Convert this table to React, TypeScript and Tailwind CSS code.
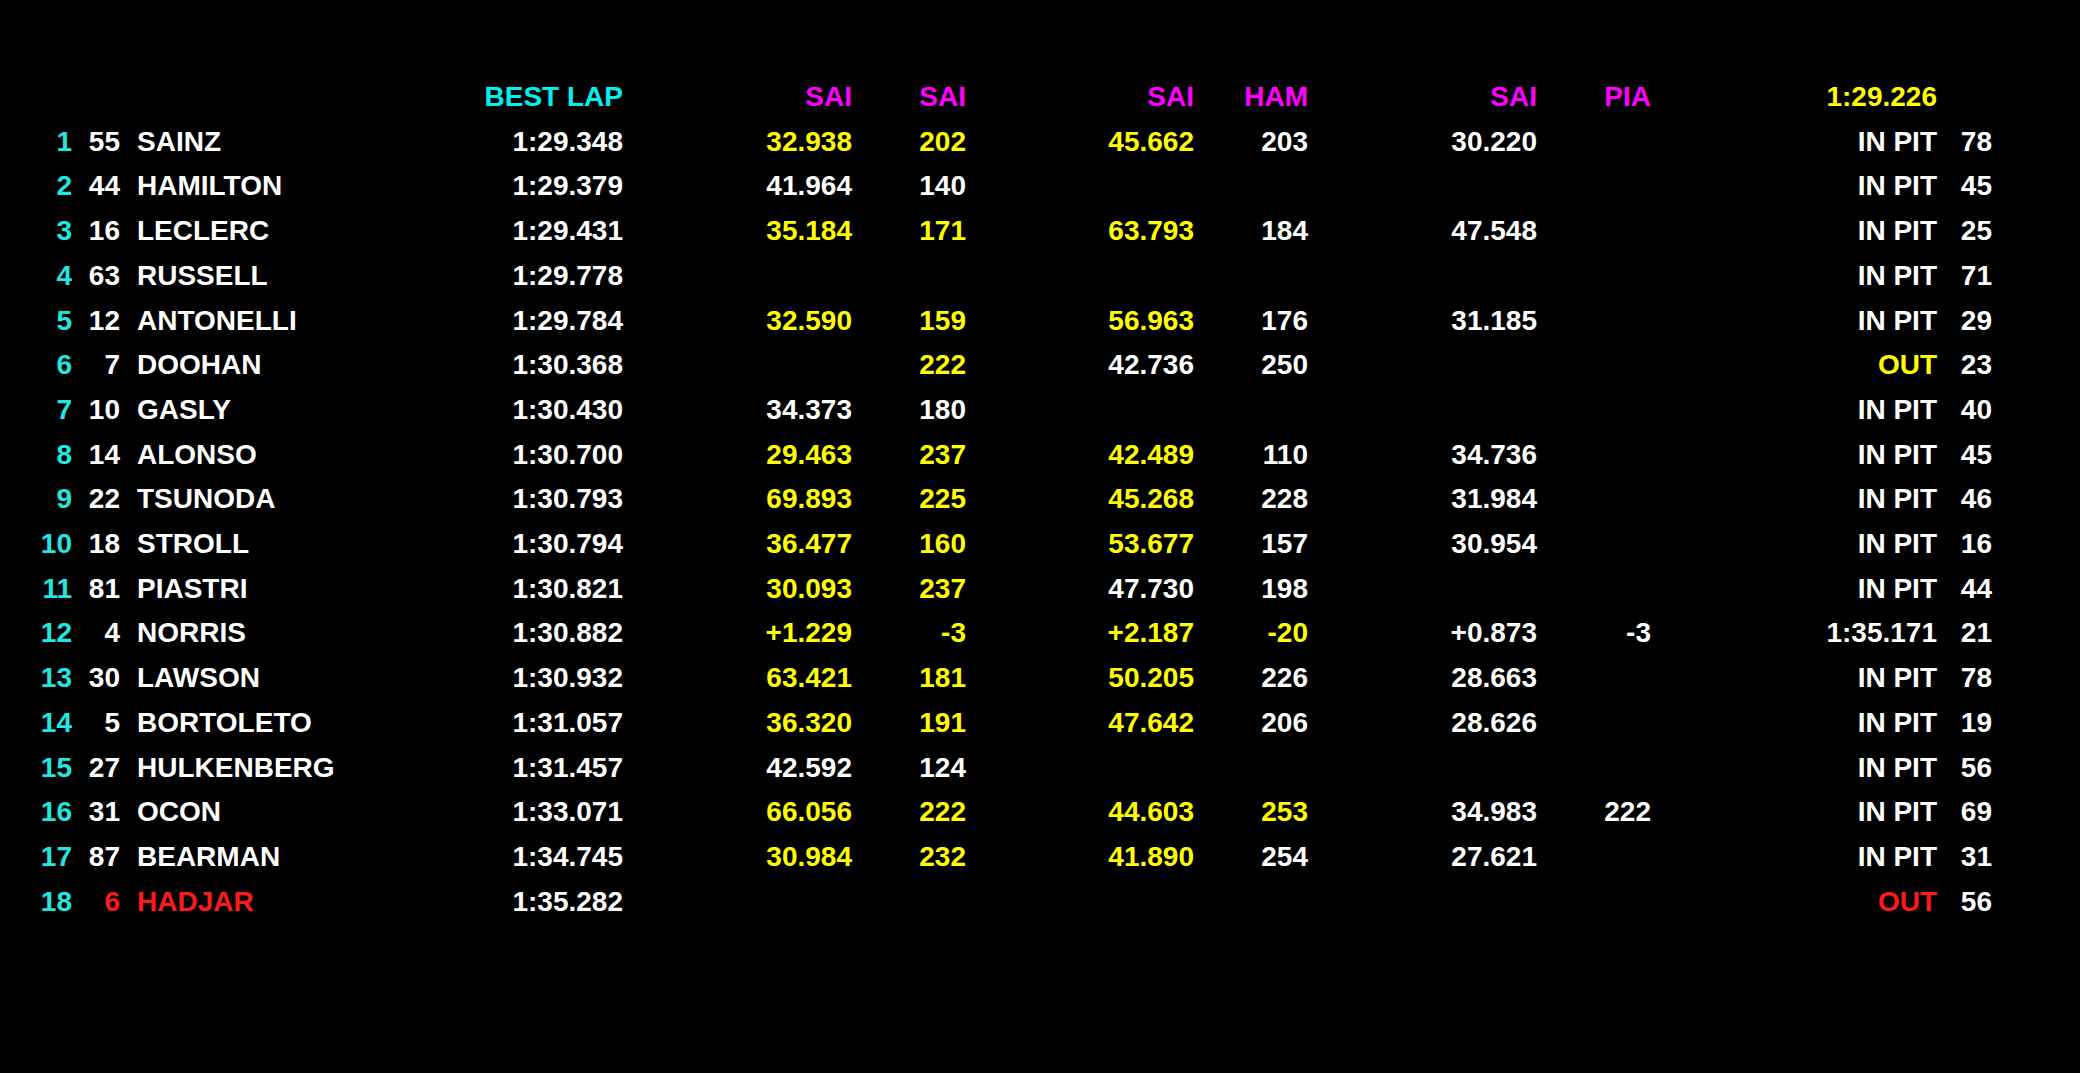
const tone: Record<string, string> = {
  y: 'text-[#ffff00]',
  w: 'text-white',
  r: 'text-[#ff1a1a]',
};

// each cell: "<colour>:<text>" or "" for an empty cell
// order: s1, s1 speed, s2, s2 speed, s3, s3 speed, pit/last
interface Row {
  pos: number;
  num: string;
  name: string;
  best: string;
  cells: string[];
  laps: string;
  out?: boolean;
}

const rows: Row[] = [
  { pos: 1, num: '55', name: 'SAINZ', best: '1:29.348', cells: ['y:32.938', 'y:202', 'y:45.662', 'w:203', 'w:30.220', '', 'w:IN PIT'], laps: '78' },
  { pos: 2, num: '44', name: 'HAMILTON', best: '1:29.379', cells: ['w:41.964', 'w:140', '', '', '', '', 'w:IN PIT'], laps: '45' },
  { pos: 3, num: '16', name: 'LECLERC', best: '1:29.431', cells: ['y:35.184', 'y:171', 'y:63.793', 'w:184', 'w:47.548', '', 'w:IN PIT'], laps: '25' },
  { pos: 4, num: '63', name: 'RUSSELL', best: '1:29.778', cells: ['', '', '', '', '', '', 'w:IN PIT'], laps: '71' },
  { pos: 5, num: '12', name: 'ANTONELLI', best: '1:29.784', cells: ['y:32.590', 'y:159', 'y:56.963', 'w:176', 'w:31.185', '', 'w:IN PIT'], laps: '29' },
  { pos: 6, num: '7', name: 'DOOHAN', best: '1:30.368', cells: ['', 'y:222', 'w:42.736', 'w:250', '', '', 'y:OUT'], laps: '23' },
  { pos: 7, num: '10', name: 'GASLY', best: '1:30.430', cells: ['w:34.373', 'w:180', '', '', '', '', 'w:IN PIT'], laps: '40' },
  { pos: 8, num: '14', name: 'ALONSO', best: '1:30.700', cells: ['y:29.463', 'y:237', 'y:42.489', 'w:110', 'w:34.736', '', 'w:IN PIT'], laps: '45' },
  { pos: 9, num: '22', name: 'TSUNODA', best: '1:30.793', cells: ['y:69.893', 'y:225', 'y:45.268', 'w:228', 'w:31.984', '', 'w:IN PIT'], laps: '46' },
  { pos: 10, num: '18', name: 'STROLL', best: '1:30.794', cells: ['y:36.477', 'y:160', 'y:53.677', 'w:157', 'w:30.954', '', 'w:IN PIT'], laps: '16' },
  { pos: 11, num: '81', name: 'PIASTRI', best: '1:30.821', cells: ['y:30.093', 'y:237', 'w:47.730', 'w:198', '', '', 'w:IN PIT'], laps: '44' },
  { pos: 12, num: '4', name: 'NORRIS', best: '1:30.882', cells: ['y:+1.229', 'y:-3', 'y:+2.187', 'y:-20', 'w:+0.873', 'w:-3', 'w:1:35.171'], laps: '21' },
  { pos: 13, num: '30', name: 'LAWSON', best: '1:30.932', cells: ['y:63.421', 'y:181', 'y:50.205', 'w:226', 'w:28.663', '', 'w:IN PIT'], laps: '78' },
  { pos: 14, num: '5', name: 'BORTOLETO', best: '1:31.057', cells: ['y:36.320', 'y:191', 'y:47.642', 'w:206', 'w:28.626', '', 'w:IN PIT'], laps: '19' },
  { pos: 15, num: '27', name: 'HULKENBERG', best: '1:31.457', cells: ['w:42.592', 'w:124', '', '', '', '', 'w:IN PIT'], laps: '56' },
  { pos: 16, num: '31', name: 'OCON', best: '1:33.071', cells: ['y:66.056', 'y:222', 'y:44.603', 'y:253', 'w:34.983', 'w:222', 'w:IN PIT'], laps: '69' },
  { pos: 17, num: '87', name: 'BEARMAN', best: '1:34.745', cells: ['y:30.984', 'y:232', 'y:41.890', 'w:254', 'w:27.621', '', 'w:IN PIT'], laps: '31' },
  { pos: 18, num: '6', name: 'HADJAR', best: '1:35.282', cells: ['', '', '', '', '', '', 'r:OUT'], laps: '56', out: true },
];

const Cell = ({ value }: { value: string }) => {
  if (!value) return <span />;
  const [c, ...rest] = value.split(':');
  return <span className={`text-right ${tone[c]}`}>{rest.join(':')}</span>;
};

const gridCols =
  'grid grid-cols-[48px_48px_340px_163px_229px_114px_228px_114px_229px_114px_286px_55px]';

export default function App() {
  return (
    <div
      className="min-h-screen w-full bg-black pl-[24px] pt-[75px] text-[28px] font-bold leading-[44.7px] whitespace-nowrap text-white"
      style={{ fontFamily: '"Liberation Sans", Arial, sans-serif' }}
    >
      <div className={gridCols}>
        <span />
        <span />
        <span />
        <span className="text-right text-[#00f0f0]">BEST LAP</span>
        <span className="text-right text-[#ff00ff]">SAI</span>
        <span className="text-right text-[#ff00ff]">SAI</span>
        <span className="text-right text-[#ff00ff]">SAI</span>
        <span className="text-right text-[#ff00ff]">HAM</span>
        <span className="text-right text-[#ff00ff]">SAI</span>
        <span className="text-right text-[#ff00ff]">PIA</span>
        <span className="text-right text-[#ffff00]">1:29.226</span>
        <span />
      </div>

      {rows.map((r) => (
        <div key={r.pos} className={gridCols}>
          <span className="text-right text-[#22e6e0]">{r.pos}</span>
          <span className={`text-right ${r.out ? 'text-[#ff1a1a]' : 'text-white'}`}>{r.num}</span>
          <span className={`pl-[17px] ${r.out ? 'text-[#ff1a1a]' : 'text-white'}`}>{r.name}</span>
          <span className="text-right">{r.best}</span>
          {r.cells.map((c, i) => (
            <Cell key={i} value={c} />
          ))}
          <span className="text-right">{r.laps}</span>
        </div>
      ))}
    </div>
  );
}
